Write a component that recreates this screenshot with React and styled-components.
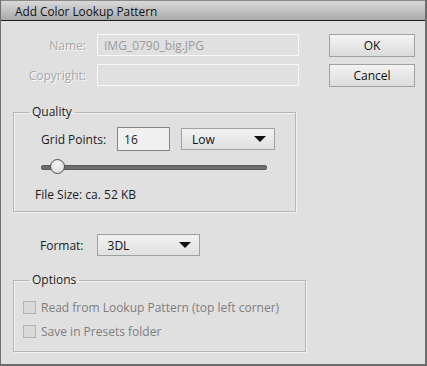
import React from "react";
import styled, { createGlobalStyle } from "styled-components";

const GlobalStyle = createGlobalStyle`
  html, body {
    margin: 0;
    padding: 0;
    background: #e0e0e0;
  }
  body {
    font-family: "Open Sans", "Noto Sans", sans-serif;
    font-size: 12px;
  }
`;

const Window = styled.div`
  width: 427px;
  height: 366px;
  box-sizing: border-box;
  background: #e0e0e0;
  border-left: 1px solid #707070;
  border-right: 2px solid #6c6c6c;
  border-bottom: 2px solid #6c6c6c;
  display: flex;
  flex-direction: column;
  color: #1c1c1c;
`;

const TitleBar = styled.div`
  height: 21px;
  flex: none;
  box-sizing: border-box;
  border-bottom: 1px solid #1e1e1e;
  border-top: 1px solid #8a8a8a;
  background: linear-gradient(#d9d9d9, #a9a9a9);
  padding-left: 14px;
  display: flex;
  align-items: center;
  font-size: 11.8px;
  color: #111;
`;

const Body = styled.div`
  flex: 1;
  display: flex;
  gap: 24px;
  padding: 13px 0 0 12px;
`;

const LeftColumn = styled.div`
  width: 292px;
  display: flex;
  flex-direction: column;
`;

const RightColumn = styled.div`
  display: flex;
  flex-direction: column;
  gap: 7px;
`;

const FormGrid = styled.div`
  display: grid;
  grid-template-columns: 73px 202px;
  grid-auto-rows: 22px;
  column-gap: 11px;
  row-gap: 8px;
`;

const DisabledLabel = styled.label`
  text-align: right;
  align-self: center;
  color: #a9a9a9;
  text-shadow: 1px 1px 0 #fafafa;
`;

const DisabledInput = styled.div`
  box-sizing: border-box;
  border: 1px solid #f7f7f7;
  background: #e0e0e0;
  color: #9b9b9b;
  padding: 0 6px;
  display: flex;
  align-items: center;
  font-size: 12px;
`;

const Button = styled.button`
  width: 86px;
  height: 23px;
  box-sizing: border-box;
  border: 1px solid #a2a2a2;
  background: linear-gradient(#f3f3f3, #dcdcdc);
  font-family: inherit;
  font-size: 12px;
  color: #111;
  padding: 0;
`;

const Group = styled.fieldset`
  margin: 0;
  padding: 0;
  box-sizing: border-box;
  width: ${(p) => p.$width}px;
  margin-top: ${(p) => p.$top}px;
  border: 1px solid #b6b6b6;
  box-shadow: inset 1px 1px 0 #f2f2f2, 1px 1px 0 #f2f2f2;
`;

const Legend = styled.legend`
  margin-left: 15px;
  padding: 0 3px;
  line-height: 16px;
  font-size: 12px;
  color: #1c1c1c;
`;

const GroupContent = styled.div`
  padding: ${(p) => p.$pad};
  display: flex;
  flex-direction: column;
  gap: ${(p) => p.$gap || 0}px;
`;

const Row = styled.div`
  display: flex;
  align-items: center;
`;

const Label = styled.span`
  font-size: 12px;
  color: #1c1c1c;
`;

const NumberBox = styled.div`
  width: 53px;
  height: 24px;
  box-sizing: border-box;
  border: 1px solid #858585;
  background: #f0f0f0;
  padding: 0 6px;
  display: flex;
  align-items: center;
  font-size: 12px;
  margin-left: 11px;
`;

const Select = styled.div`
  width: ${(p) => p.$width}px;
  height: 22px;
  box-sizing: border-box;
  border: 1px solid #a0a0a0;
  background: linear-gradient(#f2f2f2, #e0e0e0);
  padding: 0 6px 0 ${(p) => p.$padLeft}px;
  margin-left: ${(p) => p.$left}px;
  display: flex;
  align-items: center;
  justify-content: space-between;
  font-size: 12px;
  color: #111;
`;

const Arrow = styled.span`
  width: 0;
  height: 0;
  border-left: 6px solid transparent;
  border-right: 6px solid transparent;
  border-top: 6px solid #111;
  margin-right: 2px;
`;

const SliderRow = styled.div`
  height: 16px;
  margin-top: 8px;
  width: 226px;
  display: flex;
  align-items: center;
  position: relative;
`;

const Track = styled.div`
  flex: 1;
  height: 3px;
  border-radius: 2px;
  background: #6e6e6e;
  border: 1px solid #5a5a5a;
`;

const Thumb = styled.div`
  position: absolute;
  left: 9px;
  top: 0;
  width: 15px;
  height: 15px;
  border-radius: 50%;
  box-sizing: border-box;
  border: 1px solid #505050;
  background: radial-gradient(circle at 50% 35%, #f4f4f4, #d6d6d6);
`;

const FileSize = styled.div`
  margin: 12px 0 0 -6px;
  line-height: 16px;
  font-size: 12px;
`;

const FormatRow = styled(Row)`
  margin-top: 22px;
  padding-left: 27px;
`;

const CheckRow = styled.label`
  display: flex;
  align-items: center;
  gap: 5px;
  height: 16px;
  color: #7e7e7e;
  font-size: 12px;
`;

const CheckBox = styled.span`
  width: 13px;
  height: 13px;
  box-sizing: border-box;
  border: 1px solid #b3b3b3;
  background: #d9d9d9;
`;

export default function App() {
  return (
    <>
      <GlobalStyle />
      <Window>
        <TitleBar>Add Color Lookup Pattern</TitleBar>
        <Body>
          <LeftColumn>
            <FormGrid>
              <DisabledLabel>Name:</DisabledLabel>
              <DisabledInput>IMG_0790_big.JPG</DisabledInput>
              <DisabledLabel>Copyright:</DisabledLabel>
              <DisabledInput />
            </FormGrid>

            <Group $width={283} $top={18}>
              <Legend>Quality</Legend>
              <GroupContent $pad="7px 0 8px 27px">
                <Row>
                  <Label>Grid Points:</Label>
                  <NumberBox>16</NumberBox>
                  <Select $width={94} $left={11} $padLeft={10}>
                    Low
                    <Arrow />
                  </Select>
                </Row>
                <SliderRow>
                  <Track />
                  <Thumb />
                </SliderRow>
                <FileSize>File Size: ca. 52 KB</FileSize>
              </GroupContent>
            </Group>

            <FormatRow>
              <Label>Format:</Label>
              <Select $width={103} $left={13} $padLeft={10}>
                3DL
                <Arrow />
              </Select>
            </FormatRow>

            <Group $width={293} $top={16}>
              <Legend>Options</Legend>
              <GroupContent $pad="11px 0 12px 9px" $gap={8}>
                <CheckRow>
                  <CheckBox />
                  Read from Lookup Pattern (top left corner)
                </CheckRow>
                <CheckRow>
                  <CheckBox />
                  Save in Presets folder
                </CheckRow>
              </GroupContent>
            </Group>
          </LeftColumn>
          <RightColumn>
            <Button>OK</Button>
            <Button>Cancel</Button>
          </RightColumn>
        </Body>
      </Window>
    </>
  );
}
